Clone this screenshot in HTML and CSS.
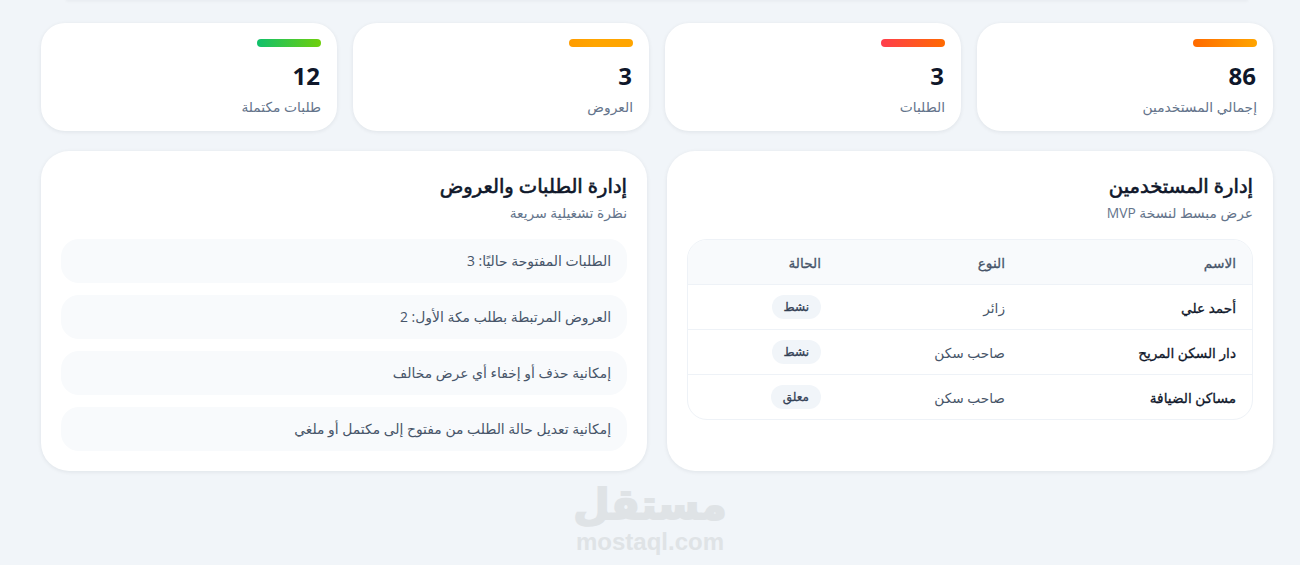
FILE: index.html
```html
<!DOCTYPE html>
<html lang="ar" dir="rtl">
<head>
    <meta charset="UTF-8">
    <meta name="viewport" content="width=device-width, initial-scale=1.0">
    <title>لوحة الإدارة</title>
    <link rel="stylesheet" href="styles.css">
</head>
<body>

    <div class="topbar"></div>

    <!-- Stats -->
    <div class="stats">
        <div class="stat">
            <span class="bar bar-orange"></span>
            <div class="stat-value">86</div>
            <div class="stat-label">إجمالي المستخدمين</div>
        </div>
        <div class="stat">
            <span class="bar bar-red"></span>
            <div class="stat-value">3</div>
            <div class="stat-label">الطلبات</div>
        </div>
        <div class="stat">
            <span class="bar bar-amber"></span>
            <div class="stat-value">3</div>
            <div class="stat-label">العروض</div>
        </div>
        <div class="stat">
            <span class="bar bar-green"></span>
            <div class="stat-value">12</div>
            <div class="stat-label">طلبات مكتملة</div>
        </div>
    </div>

    <!-- Panels -->
    <div class="panels">
        <div class="panel">
            <h2>إدارة المستخدمين</h2>
            <p class="panel-sub">عرض مبسط لنسخة MVP</p>
            <div class="table-wrap">
                <table>
                    <thead>
                        <tr>
                            <th class="col-name">الاسم</th>
                            <th class="col-type">النوع</th>
                            <th>الحالة</th>
                        </tr>
                    </thead>
                    <tbody>
                        <tr>
                            <td class="name">أحمد علي</td>
                            <td>زائر</td>
                            <td><span class="pill">نشط</span></td>
                        </tr>
                        <tr>
                            <td class="name">دار السكن المريح</td>
                            <td>صاحب سكن</td>
                            <td><span class="pill">نشط</span></td>
                        </tr>
                        <tr>
                            <td class="name">مساكن الضيافة</td>
                            <td>صاحب سكن</td>
                            <td><span class="pill">معلق</span></td>
                        </tr>
                    </tbody>
                </table>
            </div>
        </div>

        <div class="panel">
            <h2>إدارة الطلبات والعروض</h2>
            <p class="panel-sub">نظرة تشغيلية سريعة</p>
            <div class="list">
                <div class="list-item">الطلبات المفتوحة حاليًا: 3</div>
                <div class="list-item">العروض المرتبطة بطلب مكة الأول: 2</div>
                <div class="list-item">إمكانية حذف أو إخفاء أي عرض مخالف</div>
                <div class="list-item">إمكانية تعديل حالة الطلب من مفتوح إلى مكتمل أو ملغي</div>
            </div>
        </div>
    </div>

    <!-- Watermark -->
    <div class="watermark">
        <div class="wm-ar">مستقل</div>
        <div class="wm-en">mostaql.com</div>
    </div>

</body>
</html>
```

FILE: styles.css
```css
/* Basic styles */
body {
    font-family: 'Open Sans', 'DejaVu Sans', sans-serif;
    background-color: #f1f5f9;
    color: #0f172a;
    margin: 0;
    padding: 0 27px 0 41px;
    height: 565px;
    overflow: hidden;
    position: relative;
    box-sizing: border-box;
}

.topbar {
    height: 1px;
    margin: -1px 25px 0 25px;
    box-shadow: 0 1px 3px rgba(15, 23, 42, 0.1);
}

/* Stat cards */
.stats {
    display: grid;
    grid-template-columns: repeat(4, 1fr);
    gap: 16px;
    margin-top: 23px;
}

.stat {
    background-color: #fff;
    border-radius: 24px;
    box-shadow: 0 1px 4px rgba(15, 23, 42, 0.08);
    padding: 16px;
    height: 108px;
    box-sizing: border-box;
}

.bar {
    display: block;
    width: 64px;
    height: 8px;
    border-radius: 4px;
}

.bar-orange { background: linear-gradient(90deg, #ff6a00, #ffa500); }
.bar-red { background: linear-gradient(90deg, #ff3d4d, #ff6a00); }
.bar-amber { background: linear-gradient(90deg, #ff9c00, #ffa500 40%); }
.bar-green { background: linear-gradient(90deg, #10c06c, #6fcf0c); }

.stat-value {
    font-size: 24px;
    font-weight: 700;
    line-height: 32px;
    margin-top: 13px;
    margin-right: 1px;
}

.stat-label {
    font-size: 13.8px;
    line-height: 20px;
    margin-top: 5px;
    color: #64748b;
}

/* Panels */
.panels {
    display: grid;
    grid-template-columns: 606px 606px;
    gap: 20px;
    margin-top: 20px;
}

.panel {
    background-color: #fff;
    border-radius: 28px;
    box-shadow: 0 1px 4px rgba(15, 23, 42, 0.08);
    padding: 20px;
    height: 320px;
    box-sizing: border-box;
}

/* DejaVu's bold Arabic runs much wider than the original, so thicken the regular cut */
.panel h2 {
    font-size: 19.5px;
    font-weight: 400;
    -webkit-text-stroke: 0.6px #0f172a;
    line-height: 30px;
    margin: 0;
}

.panel-sub {
    font-size: 13.8px;
    line-height: 20px;
    margin: 2px 0 16px;
    color: #64748b;
}

/* Users table */
.table-wrap {
    border: 1px solid #eef2f7;
    border-radius: 20px;
    overflow: hidden;
}

table {
    width: 100%;
    border-collapse: separate;
    border-spacing: 0;
    table-layout: fixed;
    font-size: 13.7px;
}

th, td {
    padding: 0 16px;
    height: 45px;
    text-align: right;
    box-sizing: border-box;
}

th {
    height: 44px;
    background-color: #f8fafc;
    font-weight: 400;
    -webkit-text-stroke: 0.3px #475569;
    color: #475569;
}

td {
    border-top: 1px solid #eef2f7;
    color: #475569;
}

.col-name { width: 231px; }
.col-type { width: 184px; }

td.name {
    -webkit-text-stroke: 0.3px #0f172a;
    color: #0f172a;
}

.pill {
    display: inline-block;
    font-size: 12px;
    line-height: 24px;
    padding: 0 12px;
    border-radius: 12px;
    background-color: #f1f5f9;
    -webkit-text-stroke: 0.3px #334155;
    color: #334155;
}

/* Ops list */
.list {
    display: flex;
    flex-direction: column;
    gap: 12px;
}

.list-item {
    background-color: #f8fafc;
    border-radius: 18px;
    padding: 0 16px;
    height: 44px;
    line-height: 44px;
    font-size: 13.9px;
    color: #475569;
}

/* Watermark */
.watermark {
    position: absolute;
    left: 560px;
    top: 480px;
    width: 180px;
    text-align: center;
    color: #dfe3e6;
    font-weight: 700;
}

.wm-ar {
    font-family: 'DejaVu Sans', sans-serif;
    font-size: 42px;
    line-height: 50px;
    -webkit-text-stroke: 2px #dfe3e6;
}

.wm-en {
    font-family: 'Liberation Sans', sans-serif;
    font-size: 24px;
    line-height: 24px;
}
```
